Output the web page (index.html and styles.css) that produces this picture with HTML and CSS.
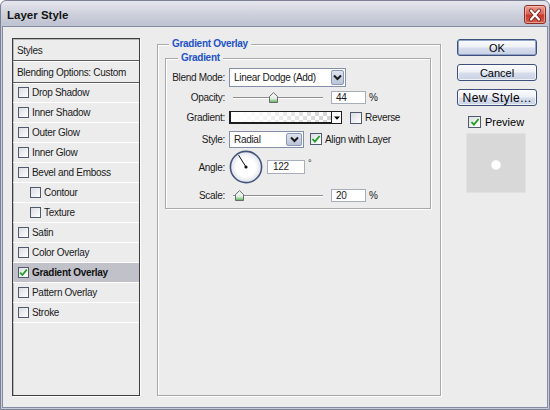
FILE: index.html
```html
<!DOCTYPE html>
<html>
<head>
<meta charset="utf-8">
<title>Layer Style</title>
<link rel="stylesheet" href="styles.css">
</head>
<body>
<div class="window">
  <div class="titlebar">
    <span class="title">Layer Style</span>
    <span class="close">
      <svg width="20" height="18" viewBox="0 0 20 18">
        <path d="M6 4.5 L14 13.5 M14 4.5 L6 13.5" stroke="#7a2219" stroke-width="4" stroke-linecap="round"/>
        <path d="M6 4.5 L14 13.5 M14 4.5 L6 13.5" stroke="#ffffff" stroke-width="2.2" stroke-linecap="round"/>
      </svg>
    </span>
  </div>
  <div class="content">
    <div class="styles-panel">
      <div class="sp-head">Styles</div>
      <div class="sp-head">Blending Options: Custom</div>
      <div class="sp-row"><span class="cb"></span>Drop Shadow</div>
      <div class="sp-row"><span class="cb"></span>Inner Shadow</div>
      <div class="sp-row"><span class="cb"></span>Outer Glow</div>
      <div class="sp-row"><span class="cb"></span>Inner Glow</div>
      <div class="sp-row"><span class="cb"></span>Bevel and Emboss</div>
      <div class="sp-row sub"><span class="cb"></span>Contour</div>
      <div class="sp-row sub"><span class="cb"></span>Texture</div>
      <div class="sp-row"><span class="cb"></span>Satin</div>
      <div class="sp-row"><span class="cb"></span>Color Overlay</div>
      <div class="sp-row active"><span class="cb"><svg width="9" height="9" viewBox="0 0 9 9"><polyline points="1.2,4.6 3.4,7 7.8,1.6" fill="none" stroke="#1f9e1f" stroke-width="1.7"/></svg></span>Gradient Overlay</div>
      <div class="sp-row"><span class="cb"></span>Pattern Overlay</div>
      <div class="sp-row"><span class="cb"></span>Stroke</div>
    </div>

    <div class="group outer">
      <div class="group-title">Gradient Overlay</div>
      <div class="group inner">
        <div class="group-title">Gradient</div>

        <div class="row r1">
          <span class="lbl">Blend Mode:</span>
          <div class="select blend">
            <span class="sel-text">Linear Dodge (Add)</span>
            <span class="sel-btn"><svg width="9" height="7" viewBox="0 0 9 7"><polyline points="1,1.5 4.5,5 8,1.5" fill="none" stroke="#1b1b1b" stroke-width="2"/></svg></span>
          </div>
        </div>

        <div class="row r2">
          <span class="lbl">Opacity:</span>
          <div class="slider">
            <span class="track"></span>
            <svg class="thumb" style="left:39.5px" width="9" height="11" viewBox="0 0 9 11"><defs><linearGradient id="tg1" x1="0" y1="0" x2="0" y2="1"><stop offset="0" stop-color="#ffffff"/><stop offset="0.6" stop-color="#dfeee0"/><stop offset="1" stop-color="#4fb04f"/></linearGradient></defs><path d="M0.5 4.5 L4.5 0.7 L8.5 4.5 L8.5 10.5 L0.5 10.5 Z" fill="url(#tg1)" stroke="#6b6b6b" stroke-width="1"/></svg>
          </div>
          <span class="num">44</span>
          <span class="unit">%</span>
        </div>

        <div class="row r3">
          <span class="lbl">Gradient:</span>
          <span class="grad"></span>
          <span class="grad-btn"><svg width="6" height="4" viewBox="0 0 6 4"><polygon points="0,0.5 6,0.5 3,3.8" fill="#000"/></svg></span>
          <span class="cb cb-lg rev"></span>
          <span class="cb-text">Reverse</span>
        </div>

        <div class="row r4">
          <span class="lbl">Style:</span>
          <div class="select style">
            <span class="sel-text">Radial</span>
            <span class="sel-btn"><svg width="9" height="7" viewBox="0 0 9 7"><polyline points="1,1.5 4.5,5 8,1.5" fill="none" stroke="#1b1b1b" stroke-width="2"/></svg></span>
          </div>
          <span class="cb cb-lg align"><svg width="10" height="10" viewBox="0 0 10 10"><polyline points="1.5,5 3.9,7.6 8.6,2" fill="none" stroke="#1f9e1f" stroke-width="1.8"/></svg></span>
          <span class="cb-text">Align with Layer</span>
        </div>

        <div class="row r5">
          <span class="lbl">Angle:</span>
          <svg class="dial" width="34" height="34" viewBox="0 0 34 34"><defs><radialGradient id="dg" cx="0.5" cy="0.5" r="0.5"><stop offset="0.6" stop-color="#ffffff"/><stop offset="1" stop-color="#dde1ea"/></radialGradient></defs><circle cx="17" cy="17" r="15.6" fill="url(#dg)" stroke="#45557a" stroke-width="1.6"/><line x1="17" y1="17" x2="9.6" y2="5.2" stroke="#111" stroke-width="1"/><circle cx="17" cy="17" r="1.6" fill="#111"/></svg>
          <span class="num ang">122</span>
          <span class="deg">°</span>
        </div>

        <div class="row r6">
          <span class="lbl">Scale:</span>
          <div class="slider">
            <span class="track"></span>
            <svg class="thumb" style="left:5.5px" width="9" height="11" viewBox="0 0 9 11"><defs><linearGradient id="tg2" x1="0" y1="0" x2="0" y2="1"><stop offset="0" stop-color="#ffffff"/><stop offset="0.6" stop-color="#dfeee0"/><stop offset="1" stop-color="#4fb04f"/></linearGradient></defs><path d="M0.5 4.5 L4.5 0.7 L8.5 4.5 L8.5 10.5 L0.5 10.5 Z" fill="url(#tg2)" stroke="#6b6b6b" stroke-width="1"/></svg>
          </div>
          <span class="num">20</span>
          <span class="unit">%</span>
        </div>
      </div>
    </div>

    <div class="side">
      <div class="btn default">OK</div>
      <div class="btn">Cancel</div>
      <div class="btn wide">New Style...</div>
      <div class="preview-row">
        <span class="cb cb-pv"><svg width="10" height="10" viewBox="0 0 10 10"><polyline points="1.5,5 3.9,7.6 8.6,2" fill="none" stroke="#1f9e1f" stroke-width="1.8"/></svg></span>
        <span class="pv-text">Preview</span>
      </div>
      <div class="preview-box"><span class="dot"></span></div>
    </div>
  </div>
</div>
</body>
</html>
```

FILE: styles.css
```css
* { box-sizing: border-box; }
html, body { margin: 0; padding: 0; }
body {
  width: 550px;
  height: 410px;
  overflow: hidden;
  background: #ffffff;
  font-family: "Liberation Sans", Arial, sans-serif;
  font-size: 10px;
  letter-spacing: -0.3px;
  color: #1a1a1a;
}

.window {
  width: 550px;
  height: 410px;
  display: flex;
  flex-direction: column;
  border: 1px solid #7c8196;
  border-radius: 6px 6px 0 0;
  background: linear-gradient(#e6e7ee 0px, #d3d5e0 10px, #c1c4d2 22px, #c9ccd8 40px);
}

.titlebar {
  height: 25px;
  flex: none;
  display: flex;
  align-items: center;
  justify-content: space-between;
  padding: 0 3px 0 6px;
}
.title {
  font-size: 11.5px;
  font-weight: bold;
  letter-spacing: 0;
  color: #141414;
  padding-top: 2px;
}
.close {
  width: 22px;
  height: 19px;
  margin-top: 2px;
  border: 1px solid #8b2f26;
  border-radius: 3px;
  background: linear-gradient(#eba093 0%, #d9685b 45%, #c53a2e 55%, #d5604f 100%);
  display: flex;
  align-items: center;
  justify-content: center;
  box-shadow: inset 0 0 0 1px rgba(255, 220, 210, 0.5);
}

.content {
  flex: 1;
  margin: 0 1px 1px 1px;
  border: 1px solid #858ba2;
  background: #ececec;
  display: flex;
  align-items: stretch;
  padding: 11px 0 11px 9px;
}

/* left styles list */
.styles-panel {
  width: 128px;
  flex: none;
  border: 1px solid #3e3e3e;
  box-shadow: 1px 1px 0 #ffffff, inset 1px 1px 0 #b8b8b8;
  background: #ececec;
}
.sp-head {
  height: 22px;
  border-bottom: 1px solid #5c5c5c;
  box-shadow: 0 1px 0 #ffffff;
  display: flex;
  align-items: center;
  padding-left: 4px;
  padding-top: 1px;
}
.sp-row {
  height: 20px;
  border-bottom: 1px solid #ffffff;
  display: flex;
  align-items: center;
  padding-left: 5px;
}
.sp-row.sub { padding-left: 17px; }
.sp-row.active {
  background: #c1c1ca;
  font-weight: bold;
  color: #111;
}
.cb {
  width: 11px;
  height: 11px;
  flex: none;
  border: 1px solid #4f5a6c;
  background: linear-gradient(135deg, #dadde2, #ffffff);
  margin-right: 3px;
  display: flex;
  align-items: center;
  justify-content: center;
}
.cb-lg { width: 12px; height: 12px; }

/* group boxes */
.group {
  border: 1px solid #a9a9a9;
  box-shadow: 1px 1px 0 #ffffff, inset 1px 1px 0 #ffffff;
}
.group.outer {
  width: 284px;
  flex: none;
  margin: 6px 0 0 17px;
}
.group.inner {
  margin: 7px 9px 0 7px;
  padding-bottom: 3px;
}
.group-title {
  width: fit-content;
  height: 14px;
  line-height: 14px;
  margin: -8px 0 0 11px;
  padding: 0 3px;
  background: #ececec;
  color: #2353c6;
  font-weight: bold;
}
.group.inner > .group-title {
  margin-left: 12px;
  margin-bottom: 2px;
}

.row {
  display: flex;
  align-items: center;
}
.r1 { height: 21px; }
.r2 { height: 18px; }
.r3 { height: 23px; }
.r4 { height: 20px; }
.r5 { height: 36px; }
.r6 { height: 20px; }

.lbl {
  width: 59px;
  flex: none;
  text-align: right;
  margin-right: 4px;
}

.select {
  display: flex;
  align-items: center;
  justify-content: space-between;
  background: #ffffff;
  border: 1px solid #8390a8;
  padding: 1px;
}
.select.blend { width: 117px; height: 19px; }
.select.style { width: 75px; height: 17px; }
.sel-text { padding-left: 3px; }
.sel-btn {
  align-self: stretch;
  display: flex;
  align-items: center;
  justify-content: center;
  border: 1px solid #8b98b3;
  border-radius: 2px;
  background: linear-gradient(#dfe4ee, #b9c3d8);
}
.select.blend .sel-btn { width: 13px; }
.select.style .sel-btn { width: 16px; }

.slider {
  position: relative;
  width: 94px;
  height: 12px;
  margin-right: 8px;
  flex: none;
}
.track {
  position: absolute;
  left: 4px;
  right: 0;
  top: 6px;
  height: 2px;
  border-top: 1px solid #8e8e8e;
  border-bottom: 1px solid #ffffff;
}
.thumb {
  position: absolute;
  top: 1px;
}

.num {
  width: 35px;
  height: 13px;
  flex: none;
  border: 1px solid #a7afba;
  background: #ffffff;
  padding-left: 4px;
  line-height: 11px;
  font-size: 10px;
}
.num.ang {
  width: 38px;
  height: 14px;
  line-height: 12px;
  margin-left: 4px;
  padding-left: 5px;
}
.unit { margin-left: 3px; }
.deg {
  margin-left: 3px;
  align-self: flex-start;
  margin-top: 9px;
  font-size: 9px;
}

.grad {
  width: 103px;
  height: 13px;
  flex: none;
  border: 1px solid #1e1e1e;
  border-left-width: 2px;
  border-bottom-width: 2px;
  background:
    linear-gradient(to right, #ffffff 0%, rgba(255, 255, 255, 0.8) 30%, rgba(255, 255, 255, 0) 100%),
    repeating-conic-gradient(#d2d2d2 0 25%, #ffffff 0 50%) 0 0 / 8px 8px;
}
.grad-btn {
  width: 10px;
  height: 13px;
  flex: none;
  border: 1px solid #1e1e1e;
  border-left: none;
  background: #ffffff;
  display: flex;
  align-items: center;
  justify-content: center;
}
.cb.rev { margin-left: 8px; }
.cb.align { margin-left: 6px; }

.dial { flex: none; }

/* right column */
.side {
  width: 80px;
  flex: none;
  margin: 1px 0 0 16px;
  display: flex;
  flex-direction: column;
}
.btn {
  height: 17px;
  margin-bottom: 8px;
  border: 1px solid #3e5079;
  border-radius: 3px;
  background: linear-gradient(#fbfcfe 0%, #eef1f7 45%, #d6dded 55%, #c8d1e4 100%);
  box-shadow: inset 0 0 0 1px rgba(255, 255, 255, 0.7);
  display: flex;
  align-items: center;
  justify-content: center;
  font-size: 11px;
  letter-spacing: 0;
  color: #000;
}
.btn.default {
  box-shadow: inset 0 0 0 1px #8fa3cc;
}
.btn.wide {
  font-size: 12px;
  letter-spacing: 0.4px;
}
.preview-row {
  height: 18px;
  margin-top: -1px;
  display: flex;
  align-items: center;
  padding-left: 11px;
}
.cb-pv { width: 13px; height: 12px; margin-right: 4px; }
.pv-text { font-size: 11px; letter-spacing: 0; color: #000; }
.preview-box {
  width: 60px;
  height: 60px;
  margin: 2px 0 0 9px;
  background: #d8d8d8;
  border: 1px solid #e2e2e2;
  display: flex;
  align-items: center;
  justify-content: center;
}
.dot {
  width: 10px;
  height: 10px;
  border-radius: 50%;
  background: radial-gradient(circle, #ffffff 0 55%, rgba(255, 255, 255, 0.6) 70%, rgba(255, 255, 255, 0) 100%);
  margin-top: 4px;
}
```
